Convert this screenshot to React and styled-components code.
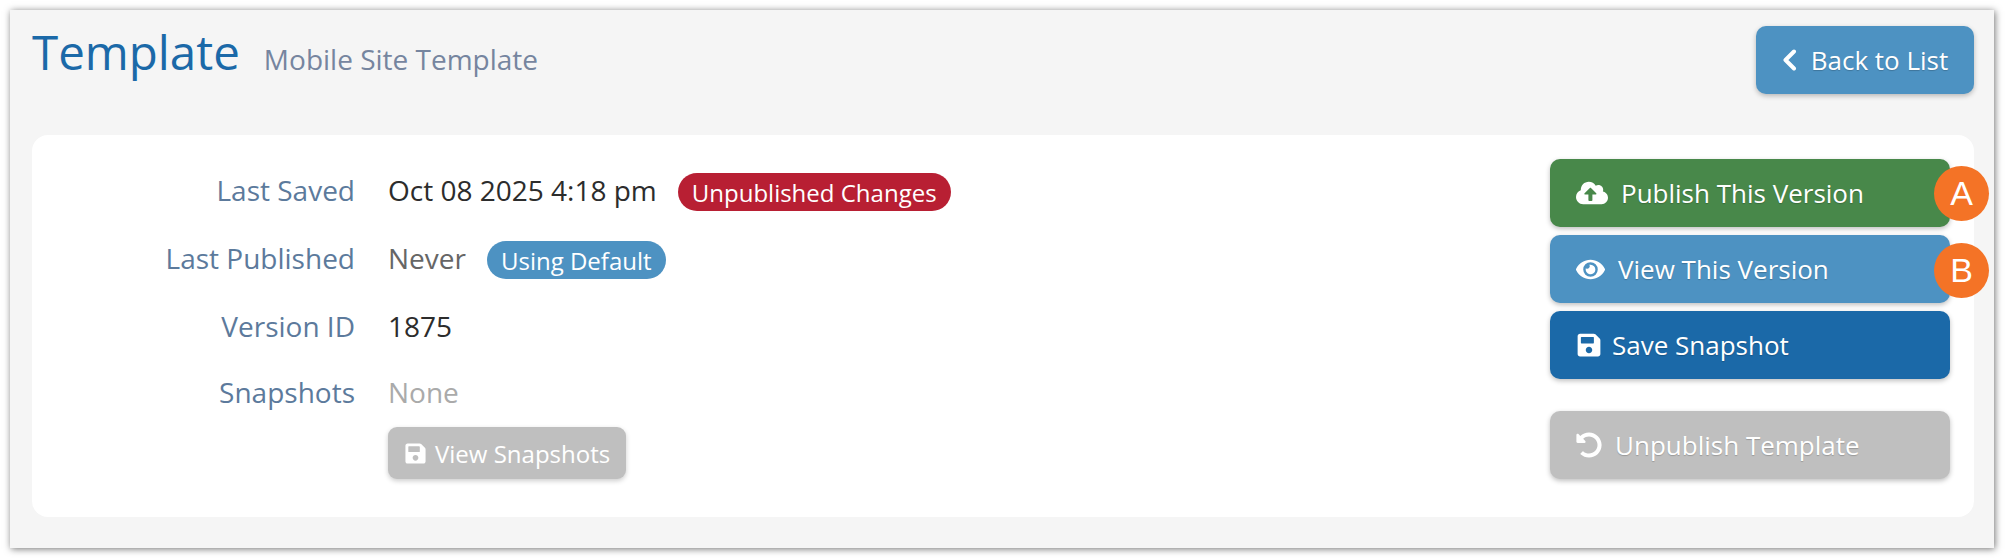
import styled, { createGlobalStyle } from 'styled-components';
import { FaCloudUploadAlt, FaEye, FaSave, FaUndoAlt } from 'react-icons/fa';

const GlobalStyle = createGlobalStyle`
  html, body {
    margin: 0;
    padding: 0;
    background: #fff;
    font-family: "Open Sans", "Liberation Sans", sans-serif;
  }
`;

const App = () => {
  return (
    <Page>
      <GlobalStyle />
      <Panel>
        <Header>
          <TitleGroup>
            <Title>Template</Title>
            <Subtitle>Mobile Site Template</Subtitle>
          </TitleGroup>
          <BackButton>
            <svg width="15" height="22" viewBox="0 0 15 22" fill="none">
              <path d="M12 2.5 L3.5 11 L12 19.5" stroke="#fff" strokeWidth="4" strokeLinecap="round" strokeLinejoin="round" />
            </svg>
            Back to List
          </BackButton>
        </Header>
        <Card>
          <Info>
            <Label>Last Saved</Label>
            <Value>
              Oct 08 2025 4:18 pm
              <Pill color="#b81f33">Unpublished Changes</Pill>
            </Value>
            <Label>Last Published</Label>
            <Value color="#666">
              Never
              <Pill color="#4d92c2">Using Default</Pill>
            </Value>
            <Label>Version ID</Label>
            <Value>1875</Value>
            <Label>Snapshots</Label>
            <Value color="#aaa">None</Value>
            <span />
            <SmallButton>
              <FaSave size={23} />
              View Snapshots
            </SmallButton>
          </Info>
          <Actions>
            <ActionButton color="#48884a">
              <FaCloudUploadAlt size={32} />
              Publish This Version
              <Marker top={7}>A</Marker>
            </ActionButton>
            <ActionButton color="#4d92c2">
              <FaEye size={29} />
              View This Version
              <Marker top={8}>B</Marker>
            </ActionButton>
            <ActionButton color="#1b69a8" gap={10}>
              <FaSave size={26} />
              Save Snapshot
            </ActionButton>
            <ActionButton color="#bfbfbf" $spaced>
              <FaUndoAlt size={26} />
              Unpublish Template
            </ActionButton>
          </Actions>
        </Card>
      </Panel>
    </Page>
  );
};

export default App;

const Page = styled.div`
  width: 2012px;
  height: 558px;
  padding: 10px 18px 10px 10px;
  box-sizing: border-box;
  overflow: hidden;
`;

const Panel = styled.div`
  height: 538px;
  box-sizing: border-box;
  padding: 16px 20px 0 22px;
  background: #f5f5f5;
  box-shadow: 1px 1px 7px rgba(0, 0, 0, 0.55);
`;

const Header = styled.div`
  display: flex;
  justify-content: space-between;
  align-items: flex-start;
  height: 109px;
`;

const TitleGroup = styled.div`
  display: flex;
  align-items: baseline;
  gap: 24px;
`;

const Title = styled.div`
  font-size: 47.5px;
  line-height: 52px;
  color: #1b69a8;
`;

const Subtitle = styled.div`
  font-size: 28px;
  color: #76859f;
`;

const BackButton = styled.div`
  display: flex;
  align-items: center;
  justify-content: center;
  gap: 14px;
  width: 218px;
  height: 68px;
  border-radius: 10px;
  background: #4d92c2;
  color: #fff;
  font-size: 26px;
  text-shadow: 0 1px 1px rgba(0, 0, 0, 0.2);
  box-shadow: 0 2px 5px rgba(0, 0, 0, 0.25);
`;

const Card = styled.div`
  display: flex;
  justify-content: space-between;
  height: 382px;
  box-sizing: border-box;
  padding: 24px 24px 0 0;
  background: #fff;
  border-radius: 16px;
`;

const Info = styled.div`
  display: grid;
  grid-template-columns: 323px 1fr;
  grid-template-rows: 68px 68px 66px 66px;
  column-gap: 33px;
  align-content: start;
  justify-items: start;
`;

const Label = styled.div`
  justify-self: end;
  display: flex;
  align-items: center;
  height: 62px;
  font-size: 28px;
  color: #5c7a9c;
`;

const Value = styled.div`
  display: flex;
  align-items: center;
  gap: 21px;
  height: 62px;
  font-size: 28px;
  color: ${props => props.color || '#2c2c2c'};
`;

const Pill = styled.span`
  display: flex;
  align-items: center;
  height: 38px;
  margin-top: 4px;
  padding: 0 14px;
  border-radius: 19px;
  background: ${props => props.color};
  color: #fff;
  font-size: 24px;
`;

const SmallButton = styled.div`
  display: flex;
  align-items: center;
  gap: 8px;
  width: 238px;
  height: 52px;
  box-sizing: border-box;
  padding-left: 16px;
  border-radius: 9px;
  background: #bfbfbf;
  color: #fff;
  font-size: 24px;
  box-shadow: 0 2px 5px rgba(0, 0, 0, 0.2);
`;

const Actions = styled.div`
  display: flex;
  flex-direction: column;
  gap: 8px;
  width: 400px;
`;

const ActionButton = styled.div`
  position: relative;
  display: flex;
  align-items: center;
  gap: ${props => props.gap || 13}px;
  height: 68px;
  flex-shrink: 0;
  box-sizing: border-box;
  padding-left: 26px;
  margin-top: ${props => (props.$spaced ? '24px' : '0')};
  border-radius: 10px;
  background: ${props => props.color};
  color: #fff;
  font-size: 26px;
  text-shadow: 0 1px 1px rgba(0, 0, 0, 0.2);
  box-shadow: 0 2px 5px rgba(0, 0, 0, 0.25);
`;

const Marker = styled.span`
  position: absolute;
  right: -39px;
  top: ${props => props.top}px;
  display: flex;
  align-items: center;
  justify-content: center;
  width: 55px;
  height: 55px;
  border-radius: 50%;
  background: #f47326;
  color: #fff;
  font-family: "Liberation Sans", sans-serif;
  font-size: 34px;
  text-shadow: none;
`;
